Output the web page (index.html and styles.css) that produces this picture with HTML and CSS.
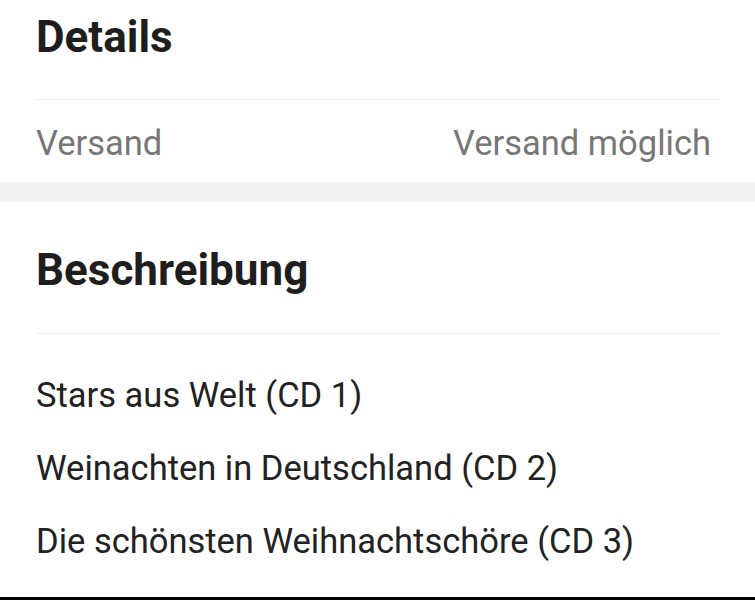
FILE: index.html
```html
<!DOCTYPE html>
<html lang="de">
<head>
<meta charset="utf-8">
<link rel="stylesheet" href="styles.css">
</head>
<body>
<section class="card details">
  <h2 class="title">Details</h2>
  <div class="divider"></div>
  <div class="row">
    <span class="label">Versand</span>
    <span class="value">Versand möglich</span>
  </div>
</section>
<div class="band"></div>
<section class="card desc">
  <h2 class="title">Beschreibung</h2>
  <div class="divider"></div>
  <ul class="lines">
    <li>Stars aus Welt (CD 1)</li>
    <li>Weinachten in Deutschland (CD 2)</li>
    <li>Die schönsten Weihnachtschöre (CD 3)</li>
  </ul>
</section>
<div class="bottom-bar"></div>
</body>
</html>
```
FILE: styles.css
```css
* { box-sizing: border-box; }
html, body {
  margin: 0;
  padding: 0;
  background: #ffffff;
  font-family: Roboto, "Noto Sans", "Liberation Sans", sans-serif;
  overflow: hidden;
}
.card {
  padding: 0 36px;
  background: #fff;
}
.title {
  margin: 0;
  font-size: 44px;
  line-height: 56px;
  font-weight: 700;
  color: #1e1e1e;
}
.details .title { padding-top: 9px; box-sizing: content-box; margin-bottom: 34px; }
.divider {
  height: 1px;
  background: #ececec;
}
.row {
  display: flex;
  justify-content: space-between;
  padding: 23px 8px 19px 0;
  font-size: 34.5px;
  line-height: 40px;
  color: #777777;
}
.band {
  height: 20px;
  background: #f2f2f2;
}
.desc .title { padding-top: 40px; box-sizing: content-box; margin-bottom: 35px; }
.lines {
  list-style: none;
  margin: 0;
  padding: 25px 0 19px;
  font-size: 34.5px;
  line-height: 73px;
  color: #222222;
}
.bottom-bar {
  height: 10px;
  background: #000;
}
```
